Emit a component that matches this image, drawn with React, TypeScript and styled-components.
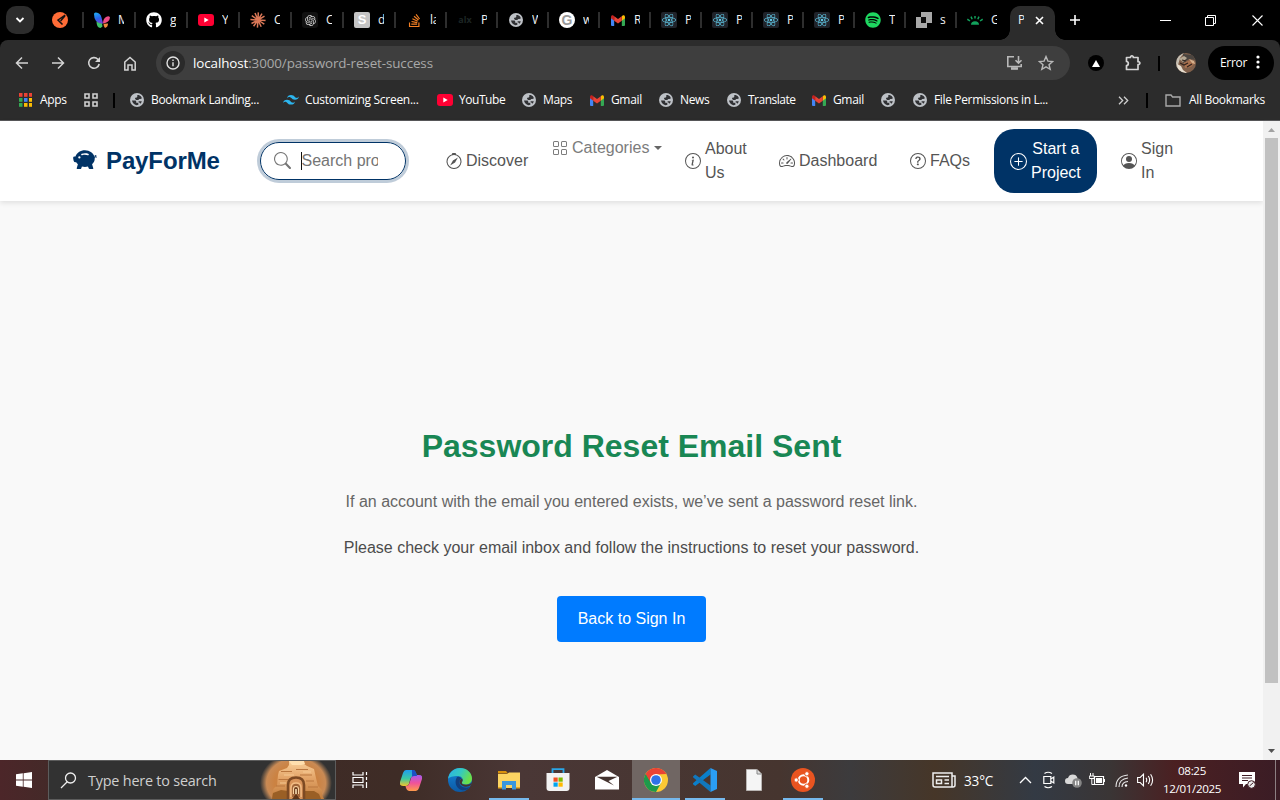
import React from "react";
import styled, { createGlobalStyle, css } from "styled-components";
import {
  BsPiggyBankFill,
  BsSearch,
  BsCompass,
  BsGrid,
  BsInfoCircle,
  BsSpeedometer2,
  BsQuestionCircle,
  BsPlusCircle,
  BsPersonCircle,
} from "react-icons/bs";
import { FaReact, FaGithub, FaSpotify, FaStackOverflow } from "react-icons/fa";
import { RiOpenaiFill } from "react-icons/ri";

const ui = `"Open Sans", "Noto Sans", sans-serif`;
const arial = `"Liberation Sans", Arial, sans-serif`;

const GlobalStyle = createGlobalStyle`
  *, *::before, *::after { box-sizing: border-box; }
  html, body { margin: 0; padding: 0; background: #000; overflow: hidden; }
  svg { display: block; flex: none; }
`;

/* ---------- window ---------- */

const Screen = styled.div`
  width: 1280px;
  height: 800px;
  display: flex;
  flex-direction: column;
  overflow: hidden;
  font-family: ${ui};
`;

const TabStrip = styled.div`
  height: 40px;
  flex: none;
  display: flex;
  align-items: center;
  background: #000;
  color: #f2f2f2;
`;

const TabSearch = styled.div`
  width: 28px;
  height: 28px;
  margin-left: 6px;
  border-radius: 10px;
  background: #2c2c2c;
  display: flex;
  align-items: center;
  justify-content: center;
`;

const PinnedTab = styled.div`
  width: 48px;
  padding-left: 18px;
`;

const Tab = styled.div<{ $w: number }>`
  width: ${(p) => p.$w}px;
  height: 16px;
  border-left: 2px solid #2e2e2e;
  padding-left: 10px;
  display: flex;
  align-items: center;
`;

const TabIcon = styled.span`
  width: 16px;
  height: 16px;
  display: flex;
  align-items: center;
  justify-content: center;
`;

const TabTitle = styled.span`
  width: 6px;
  margin-left: 8px;
  overflow: hidden;
  white-space: nowrap;
  font-size: 12px;
  line-height: 20px;
  letter-spacing: -0.3px;
`;

const ActiveTab = styled.div`
  position: relative;
  align-self: flex-end;
  width: 45px;
  height: 34px;
  margin-left: 4px;
  border-radius: 10px 10px 0 0;
  background: #2c2c2c;
  display: flex;
  align-items: center;
  padding-bottom: 6px;
  &::before,
  &::after {
    content: "";
    position: absolute;
    bottom: 0;
    width: 10px;
    height: 10px;
  }
  &::before {
    left: -10px;
    background: radial-gradient(circle at 0 0, transparent 9.5px, #2c2c2c 10px);
  }
  &::after {
    right: -10px;
    background: radial-gradient(circle at 100% 0, transparent 9.5px, #2c2c2c 10px);
  }
`;

const ActiveClose = styled.span`
  margin-left: 11px;
`;

const NewTab = styled.div`
  margin-left: 14px;
`;

const WindowControls = styled.div`
  margin-left: auto;
  width: 138px;
  display: flex;
  & > * {
    width: 46px;
    display: flex;
    justify-content: center;
  }
`;

const Toolbar = styled.div`
  height: 46px;
  flex: none;
  display: flex;
  align-items: center;
  background: linear-gradient(#2c2c2c, #2c2c2c);
  border-radius: 8px 8px 0 0;
  color: #d4d4d4;
`;

const NavButton = styled.div`
  width: 36px;
  display: flex;
  justify-content: center;
`;

const NavButtons = styled.div`
  display: flex;
  padding-left: 4px;
  width: 156px;
`;

const AddressBar = styled.div`
  width: 914px;
  height: 34px;
  border-radius: 17px;
  background: #3e3e3e;
  display: flex;
  align-items: center;
  padding: 0 16px 0 5px;
`;

const SiteInfo = styled.div`
  width: 24px;
  height: 24px;
  border-radius: 50%;
  background: #2a2a2a;
  display: flex;
  align-items: center;
  justify-content: center;
`;

const Url = styled.div`
  margin-left: 8px;
  font-size: 13.4px;
  letter-spacing: -0.1px;
  color: #a9a9a9;
  flex: 1;
  b {
    font-weight: 400;
    color: #fff;
  }
`;

const AddressActions = styled.div`
  display: flex;
  gap: 15px;
  align-items: center;
`;

const ToolbarRight = styled.div`
  flex: 1;
  display: flex;
  align-items: center;
  padding-left: 18px;
`;

const Extension = styled.div`
  width: 16px;
  height: 16px;
  border-radius: 50%;
  background: #000;
  display: flex;
  align-items: center;
  justify-content: center;
`;

const VLine = styled.span<{ $ml?: number; $mr?: number }>`
  width: 2px;
  height: 15px;
  background: #000;
  flex: none;
  margin-left: ${(p) => p.$ml ?? 0}px;
  margin-right: ${(p) => p.$mr ?? 0}px;
`;

const PuzzleSlot = styled.div`
  margin-left: 20px;
`;

const ErrorPill = styled.div`
  width: 66px;
  height: 34px;
  margin-left: 12px;
  border-radius: 17px;
  background: #000;
  color: #fff;
  display: flex;
  align-items: center;
  justify-content: space-between;
  padding: 0 14px 2px 12px;
  font-size: 12px;
  letter-spacing: -0.3px;
`;

const BookmarksBar = styled.div`
  height: 35px;
  flex: none;
  display: flex;
  align-items: center;
  background: #2c2c2c;
  border-bottom: 1px solid #58585a;
  padding: 0 0 6px 18px;
  color: #fff;
`;

const Bookmark = styled.div<{ $w?: number; $gap?: number; $ls?: number }>`
  width: ${(p) => (p.$w ? p.$w + "px" : "auto")};
  display: flex;
  align-items: center;
  gap: ${(p) => p.$gap ?? 6}px;
  font-size: 12px;
  line-height: 16px;
  letter-spacing: ${(p) => p.$ls ?? -0.35}px;
  white-space: nowrap;
`;

const BookmarksEnd = styled.div`
  margin-left: auto;
  display: flex;
  align-items: center;
  padding-right: 15px;
`;

/* ---------- page ---------- */

const Viewport = styled.div`
  flex: 1;
  display: flex;
  min-height: 0;
`;

const Page = styled.main`
  flex: 1;
  display: flex;
  flex-direction: column;
  background: #f9f9f9;
  font-family: ${arial};
  font-size: 16px;
  line-height: 24px;
`;

const Header = styled.header`
  height: 80px;
  flex: none;
  display: flex;
  align-items: center;
  background: #fff;
  box-shadow: 0 2px 5px rgba(0, 0, 0, 0.1);
  color: #555;
`;

const Brand = styled.div`
  width: 187px;
  margin-left: 73px;
  display: flex;
  align-items: center;
  gap: 9px;
  color: #036;
  font-size: 24px;
  font-weight: 700;
  line-height: 36px;
  letter-spacing: -0.12px;
  svg {
    margin-bottom: 2px;
  }
`;

const SearchField = styled.div`
  width: 146px;
  height: 38px;
  flex: none;
  border: 1px solid #036;
  border-radius: 19px;
  box-shadow: 0 0 0 3px rgba(0, 51, 102, 0.25);
  display: flex;
  align-items: center;
  padding: 0 0 1px 13px;
  color: #757575;
`;

const Placeholder = styled.span`
  margin-left: 10px;
  width: 77px;
  height: 18px;
  line-height: 18px;
  border-left: 1px solid #111;
  overflow: hidden;
  white-space: nowrap;
  text-indent: -0.5px;
`;

const MenuLink = styled.a<{ $w: number; $gap?: number; $top?: boolean }>`
  width: ${(p) => p.$w}px;
  flex: none;
  display: flex;
  align-items: center;
  gap: ${(p) => p.$gap ?? 4}px;
  ${(p) =>
    p.$top &&
    css`
      align-self: flex-start;
      margin-top: 15px;
      color: #7c7c7c;
    `}
`;

const Menu = styled.nav`
  display: flex;
  align-items: center;
  height: 80px;
  margin-left: 40px;
`;

const Caret = styled.i`
  border: 4.5px solid transparent;
  border-top-color: #666;
  border-bottom: 0;
  margin-left: 1px;
`;

const StartButton = styled.a`
  width: 103px;
  height: 64px;
  margin-right: 24px;
  border-radius: 20px;
  background: #036;
  color: #fff;
  display: flex;
  align-items: center;
  gap: 4px;
  padding-left: 16px;
  text-align: center;
`;

const Content = styled.section`
  flex: 1;
  display: flex;
  flex-direction: column;
  align-items: center;
  padding-top: 226px;
`;

const Title = styled.h1`
  margin: 0;
  font-size: 32px;
  line-height: 38px;
  font-weight: 700;
  color: #198754;
  white-space: nowrap;
`;

const Message = styled.p<{ $mt: number; $color: string }>`
  margin: ${(p) => p.$mt}px 0 0;
  color: ${(p) => p.$color};
`;

const BackButton = styled.a`
  width: 149px;
  height: 46px;
  margin-top: 36px;
  border-radius: 4px;
  background: #007bff;
  color: #fff;
  display: flex;
  align-items: center;
  justify-content: center;
`;

const ScrollBar = styled.div`
  width: 17px;
  flex: none;
  background: #f1f1f1;
  display: flex;
  flex-direction: column;
  align-items: center;
`;

const ScrollArrow = styled.div`
  height: 17px;
  display: flex;
  align-items: center;
`;

const Thumb = styled.div`
  width: 13px;
  height: 545px;
  margin-bottom: 59px;
  background: #c1c1c1;
`;

/* ---------- taskbar ---------- */

const Taskbar = styled.footer`
  height: 40px;
  flex: none;
  display: flex;
  color: #fff;
  background: linear-gradient(
    90deg,
    #4c2629 0,
    #422a28 60px,
    #3e2c26 400px,
    #4a3736 520px,
    #46352f 780px,
    #3c3b3d 850px,
    #463628 935px,
    #333a44 1035px,
    #3a3535 1110px,
    #4b2022 1175px,
    #3a1c25 1280px
  );
`;

const Start = styled.div`
  width: 48px;
  display: flex;
  align-items: center;
  justify-content: center;
`;

const TaskSearch = styled.div`
  width: 288px;
  border: 1px solid #5c5c5c;
  background: #323232;
  display: flex;
  align-items: center;
  padding: 0 3px 0 11px;
  color: #cfcfcf;
  font-size: 14.4px;
  letter-spacing: -0.2px;
  span {
    flex: 1;
    margin-left: 11px;
  }
`;

const TaskCell = styled.div<{ $w?: number; $line?: number; $active?: boolean }>`
  width: ${(p) => p.$w ?? 48}px;
  margin-right: ${(p) => (p.$w ? 3 : 1)}px;
  height: 40px;
  display: flex;
  flex-direction: column;
  align-items: center;
  background: ${(p) => (p.$active ? "#706663" : "transparent")};
  & > span {
    height: 38px;
    display: flex;
    align-items: center;
    padding-top: 2px;
  }
  &::after {
    content: "";
    width: ${(p) => p.$line ?? 0}px;
    height: 2px;
    background: #76b9ed;
  }
`;

const Tray = styled.div`
  margin-left: auto;
  display: flex;
  align-items: center;
`;

const Weather = styled.div`
  display: flex;
  align-items: center;
  gap: 8px;
  width: 81px;
  font-size: 13.6px;
  letter-spacing: -0.2px;
`;

const TrayIcon = styled.div`
  width: 24px;
  display: flex;
  justify-content: center;
`;

const Clock = styled.div`
  width: 70px;
  text-align: center;
  font-size: 11.6px;
  line-height: 18px;
  letter-spacing: -0.35px;
  white-space: nowrap;
`;

const Notice = styled.div`
  width: 48px;
  padding-right: 8px;
  display: flex;
  justify-content: center;
`;

const DesktopEdge = styled.div`
  width: 5px;
  height: 40px;
  border-left: 1px solid #8c7f82;
`;

/* ---------- icons ---------- */

const Globe = () => (
  <svg width="14" height="14" viewBox="0 0 14 14">
    <circle cx="7" cy="7" r="7" fill="#bdc1c6" />
    <path
      d="M2 7.6h3.2q1 0 1 1v1.2h1.2q1 0 1 1v.9q-1.2.6-2.6.4Q2.6 11 2 7.6zM7.3 1.9h1.5q2.5.8 3.2 3.3l-1.6.9H9.2L8.3 7H6.2L5.1 6V4.700h1.2l1-1zM8.600 8.200h3.200q-.4 1.600-1.600 2.500l-.7-1.100h-.9z"
      fill="#303134"
    />
  </svg>
);

const YouTube = () => (
  <svg width="16" height="12" viewBox="0 0 16 12">
    <rect width="16" height="12" rx="3" fill="#ff0033" />
    <path d="M6.300 3.600v4.800L10.700 6z" fill="#fff" />
  </svg>
);

const Gmail = () => (
  <svg width="14" height="11" viewBox="0 0 14 11">
    <path d="M0 2v8q0 1 1 1h2.200V4z" fill="#4285f4" />
    <path d="M14 2v8q0 1-1 1h-2.200V4z" fill="#34a853" />
    <path d="M10.800 1.200L12 .3Q14-.4 14 2v1.300l-3.200 2.400z" fill="#fbbc04" />
    <path d="M3.200 1.200L2 .3Q0-.4 0 2v1.300l3.200 2.400z" fill="#c5221f" />
    <path d="M3.200 1.200L7 4.100l3.800-2.900v4.500L7 8.600 3.200 5.700z" fill="#ea4335" />
  </svg>
);

const Postman = () => (
  <svg width="16" height="16" viewBox="0 0 16 16">
    <circle cx="8" cy="8" r="8" fill="#ff6c37" />
    <path d="M13.200 3.200L6 8l4.500 4.600M13 3.800L8.600 9" stroke="#111" strokeWidth="1.500" fill="none" />
  </svg>
);

const Butterfly = () => (
  <svg width="16" height="16" viewBox="0 0 16 16">
    <defs>
      <linearGradient id="wing" x1="0" y1="0" x2="0.300" y2="1">
        <stop offset="0" stopColor="#1fb5f5" />
        <stop offset="0.600" stopColor="#2a62e8" />
        <stop offset="1" stopColor="#6b46d8" />
      </linearGradient>
    </defs>
    <path d="M0 2Q0 .3 2 .5q4.500.5 5.500 5l1.500 6-2 .5Q0 10 0 2z" fill="url(#wing)" />
    <path d="M2.500 9.500Q5 11.500 8 11.500l.5 3-2 1.500Q2.500 15.500 2.500 9.500z" fill="#3fc06a" />
    <path d="M16 5.500q-1-2-3.500-.8Q9 6.500 9 11.500 15.500 10.500 16 5.500z" fill="#ee4b86" />
    <path d="M9.500 11.800l4.500-.3q0 3.500-3 4.500-1.500-1-1.500-4.200z" fill="#f08a3c" />
  </svg>
);

const Burst = () => (
  <svg width="16" height="16" viewBox="0 0 16 16">
    <path
      d="M8 8L8.300.4M8 8l4-6.300M8 8l6.500-3.800M8 8l7.600.6M8 8l6.300 4.200M8 8l3.200 6.800M8 8l-.6 7.600M8 8l-4.400 6.300M8 8l-6.500 3.500M8 8L.4 7.600M8 8L1.800 3.600M8 8L5 1"
      stroke="#d97757"
      strokeWidth="1.500"
    />
  </svg>
);

const OpenAi = styled.span`
  width: 16px;
  height: 16px;
  border-radius: 3px;
  background: #111;
  color: #d8d8d8;
  display: flex;
  align-items: center;
  justify-content: center;
`;

const LetterTile = styled.span<{ $round?: boolean }>`
  width: 16px;
  height: 16px;
  border-radius: ${(p) => (p.$round ? 8 : 2)}px;
  background: ${(p) => (p.$round ? "#fff" : "#c4c4c4")};
  color: ${(p) => (p.$round ? "#9a9a9a" : "#fff")};
  font: 700 ${(p) => (p.$round ? 14 : 13)}px/16px ${arial};
  text-align: center;
`;

const Alx = styled.span`
  font: 700 9px/16px ${ui};
  color: #1c2524;
`;

const ReactTile = styled.span`
  width: 16px;
  height: 16px;
  border-radius: 2px;
  background: #20232a;
  color: #61c8e6;
  display: flex;
  align-items: center;
  justify-content: center;
`;

const Squares = () => (
  <svg width="16" height="16" viewBox="0 0 16 16">
    <path d="M5 0h11v11H5z" fill="#a8a8a8" />
    <path d="M0 5h11v11H0z" fill="#a8a8a8" />
    <path d="M5 5h5v6H5z" fill="#0c0c0c" />
  </svg>
);

const Sunrise = () => (
  <svg width="16" height="9" viewBox="0 0 16 9">
    <path d="M4 8.800a4 3.600 0 0 1 8 0z" fill="#12a15c" />
    <path d="M.3 3.200l2.700 1.800M4 .6l1.200 2.600M8 0v2.500M12 .6l-1.200 2.600M15.700 3.200L13 5" stroke="#12a15c" strokeWidth="1.500" />
  </svg>
);

const Tailwind = () => (
  <svg width="16" height="10" viewBox="0 0 24 15">
    <path
      d="M12 0C8.800 0 6.800 1.600 6 4.800 7.200 3.200 8.600 2.600 10.200 3c.913.228 1.565.890 2.288 1.624C13.666 5.818 15.027 7.200 18 7.200c3.200 0 5.200-1.600 6-4.800-1.200 1.600-2.600 2.200-4.200 1.800-.913-.228-1.565-.890-2.288-1.624C16.337 1.382 14.976 0 12 0zM6 7.200c-3.200 0-5.200 1.600-6 4.800 1.200-1.600 2.600-2.200 4.200-1.800.913.228 1.565.890 2.288 1.624 1.177 1.194 2.538 2.576 5.512 2.576 3.200 0 5.200-1.600 6-4.800-1.200 1.600-2.600 2.200-4.200 1.800-.913-.228-1.565-.890-2.288-1.624C10.337 8.582 8.976 7.200 6 7.200z"
      fill="#2cb5ee"
    />
  </svg>
);

const AppsGrid = () => {
  const colors = ["#ea4335", "#ea4335", "#ea4335", "#34a853", "#4285f4", "#fbbc04", "#34a853", "#fbbc04", "#fbbc04"];
  return (
    <svg width="14" height="14" viewBox="0 0 14 14">
      {colors.map((c, i) => (
        <rect key={i} x={1 + (i % 3) * 5} y={Math.floor(i / 3) * 5} width="3.500" height="3.800" fill={c} />
      ))}
    </svg>
  );
};

type StrokeProps = { w: number; h?: number; d: string; sw?: number; color?: string };
const Stroke = ({ w, h = w, d, sw = 1.5, color = "currentColor" }: StrokeProps) => (
  <svg width={w} height={h} viewBox={`0 0 ${w} ${h}`} fill="none" stroke={color} strokeWidth={sw}>
    <path d={d} />
  </svg>
);

const Reload = () => (
  <svg width="14" height="14" viewBox="0 0 14 14">
    <path d="M12.200 8A5.300 5.300 0 1 1 10.800 3.200L12 4.400" fill="none" stroke="currentColor" strokeWidth="1.600" />
    <path d="M13 1v5H8z" fill="currentColor" />
  </svg>
);

const InfoDot = () => (
  <svg width="14" height="14" viewBox="0 0 14 14" stroke="#e0e0e0" fill="none" strokeWidth="1.400">
    <circle cx="7" cy="7" r="6" />
    <path d="M7 6.200v4M7 3.600v1.500" />
  </svg>
);

const Install = () => (
  <svg width="17" height="16" viewBox="0 0 17 16" stroke="#b9b9b9" fill="none" strokeWidth="1.600">
    <path d="M8 1.800H1.800v9.700h13.400V9M12.500 1v7M9.500 5.200l3 3 3-3" />
    <path d="M5 13.500h7" strokeWidth="2.600" />
  </svg>
);

const Star = () => (
  <svg width="16" height="16" viewBox="0 0 16 16" stroke="#b9b9b9" fill="none" strokeWidth="1.400">
    <path d="M8 1.600l1.900 4.500 4.800.4-3.700 3.200 1.200 4.700L8 11.900l-4.200 2.500L5 9.700 1.300 6.500l4.800-.4z" />
  </svg>
);

const Puzzle = () => (
  <svg width="18" height="18" viewBox="0 0 18 18">
    <path
      d="M2.500 3.500h4c-.2-2.200 3-2.200 2.800 0h4.700v4.200c2.500-.2 2.500 3 0 2.800v5H2.500v-4c2.400 0 2.400-4 0-4z"
      fill="none"
      stroke="#d4d4d4"
      strokeWidth="1.700"
      strokeLinejoin="round"
    />
  </svg>
);

const Avatar = () => (
  <svg width="20" height="20" viewBox="0 0 20 20">
    <defs>
      <clipPath id="avatarClip">
        <circle cx="10" cy="10" r="10" />
      </clipPath>
    </defs>
    <g clipPath="url(#avatarClip)">
      <path d="M0 0h20v20H0z" fill="#80604b" />
      <path d="M0 0h8L4 5 2 12v8H0z" fill="#c4beb2" />
      <path d="M7 1l9 1 4 5-7-1-6 4z" fill="#4b4540" />
      <path d="M3 6l5-3 3 2-4 4z" fill="#b5a894" />
      <path d="M8 10l6-3 5 3-4 4-6 1z" fill="#a9714f" />
      <path d="M1 11l4 2 2 4 4 3H3z" fill="#e8dfd0" />
      <path d="M13 6l5 2 1 3-3-1z" fill="#d6b08c" />
      <path d="M4 10l4 2 4-2M6 7l4 1M11 14l5-3" stroke="#33241e" fill="none" strokeWidth="1.200" />
    </g>
  </svg>
);

const Windows = () => (
  <svg width="16" height="16" viewBox="0 0 16 16" fill="#fff">
    <path d="M0 2.300L6.800 1.300v6.200H0zM7.600 1.200L16 0v7.500H7.600zM0 8.400h6.800v6.300L0 13.700zM7.600 8.400H16V16l-8.400-1.200z" />
  </svg>
);

const Canyon = () => (
  <svg width="72" height="38" viewBox="0 0 72 38">
    <defs>
      <linearGradient id="sand" x1="0" y1="0" x2="0" y2="1">
        <stop offset="0" stopColor="#f9d09a" />
        <stop offset="0.450" stopColor="#e3a468" />
        <stop offset="1" stopColor="#c17c3c" />
      </linearGradient>
      <radialGradient id="glow">
        <stop offset="0.600" stopColor="#cb8242" />
        <stop offset="0.820" stopColor="#c98a54" />
        <stop offset="1" stopColor="#b98a60" stopOpacity="0" />
      </radialGradient>
    </defs>
    <ellipse cx="36" cy="22" rx="36" ry="30" fill="url(#glow)" />
    <path d="M12 38V31l2-4 3-2 1-11 1-4 8-3 2-3V0h15v3l3 2 7 3 2 9 2 8 4 4v5l2 4z" fill="url(#sand)" />
    <path d="M29 0h15l1 3-4 1H32z" fill="#ffdfae" />
    <path d="M36 8.500h12M21 10.500h11M40 14h12M18.500 18.500h10M46 20h8M16 25h9M48 26h10" stroke="#b9763e" strokeWidth="1.200" />
    <path d="M24 14h10M43 11h8M20 22h6" stroke="#f6c993" strokeWidth="1.200" />
    <path d="M13 32l8-3 7 1v8H12zM45 30h9l5 3 2 5H44z" fill="#9a5f25" />
    <path d="M28 38V24q0-7.500 8-7.500t8 7.500v14" fill="#d8935a" stroke="#7d4a23" strokeWidth="2.600" />
    <path d="M31 36v-9q0-5 5-5t5 5v9" fill="#a2663a" stroke="#f3bd85" strokeWidth="1.500" />
    <path d="M33.500 33v-5q0-2.500 2.500-2.500t2.500 2.500v5" fill="#6d3c1c" stroke="#f9d2a0" strokeWidth="1.100" />
    <path d="M36 28v5" stroke="#ffe9c0" strokeWidth="1.500" />
    <path d="M32 38l4-5 4 5z" fill="#5f3417" />
  </svg>
);

const Copilot = () => (
  <svg width="22" height="21" viewBox="0 0 22 21">
    <defs>
      <linearGradient id="cpA" x1="0" y1="0" x2="0" y2="1">
        <stop offset="0" stopColor="#1f9cf0" />
        <stop offset="0.550" stopColor="#3dc9a0" />
        <stop offset="1" stopColor="#f4c52c" />
      </linearGradient>
      <linearGradient id="cpB" x1="0" y1="0" x2="0" y2="1">
        <stop offset="0" stopColor="#a45cf0" />
        <stop offset="0.500" stopColor="#f0529a" />
        <stop offset="1" stopColor="#ff9b4a" />
      </linearGradient>
    </defs>
    <path d="M6 0h7q2 0 3 3l1 3h-3q-3 0-4 4l-1 4q-1 2-3 2H3q-4 0-3-4L3 3q1-3 3-3z" fill="url(#cpA)" />
    <path d="M16 21H9q-2 0-3-3l-.5-2q3 .5 4.200-3.500L11 8q1-3 4-3h4q4 0 3 4l-3 9q-1 3-3 3z" fill="url(#cpB)" />
    <path d="M12 0h2q2 1 3 6h-3q-1 0-2 .8z" fill="#1d51c4" />
  </svg>
);

const Edge = () => (
  <svg width="24" height="24" viewBox="0 0 24 24">
    <defs>
      <linearGradient id="edA" x1="0" y1="0" x2="1" y2="0.400">
        <stop offset="0" stopColor="#2ab0e8" />
        <stop offset="0.550" stopColor="#35c9c0" />
        <stop offset="1" stopColor="#6be04a" />
      </linearGradient>
      <linearGradient id="edB" x1="0" y1="0" x2="0" y2="1">
        <stop offset="0" stopColor="#1685d8" />
        <stop offset="1" stopColor="#0c59a4" />
      </linearGradient>
    </defs>
    <circle cx="12" cy="12" r="12" fill="url(#edB)" />
    <path d="M0 11C1 4 6 0 12 0c7 0 12 5 12 10.500 0 4-3 6-6.500 6-3 0-4-1.200-3.500-2.200 2-3.300-.5-6.300-4-6.300C5 8 1 9 0 11z" fill="url(#edA)" />
    <path d="M9 9c-3 5-1 11 4 13 4 1 7-.5 9-3-6 2-11-1-10.500-5 0-2 1-3 2-3.500Q12 8 9 9z" fill="#123f7e" />
    <path d="M14 10.500c-3 1.500-3.200 5 0 7s6.500 1 8.700-.2L24 14.500q-2 2.500-6.500 2.200-4.500-.2-3.500-2.700 1.500-1.700 0-3.500z" fill="#44332f" />
  </svg>
);

const Explorer = () => (
  <svg width="22" height="19" viewBox="0 0 22 19">
    <path d="M0 0h8l2 2.500H0z" fill="#d9920c" />
    <path d="M0 3h9l2-1.500h11V17H0z" fill="#fcd462" />
    <path d="M4 10h14v8.500h-4V14H8v4.500H4z" fill="#3a96dd" />
    <path d="M0 16h4v1.500H0zM18 16h4v1.500h-4z" fill="#e8a823" />
  </svg>
);

const Store = () => (
  <svg width="24" height="24" viewBox="0 0 24 24">
    <path d="M6.500 6V1.200h11V6" fill="none" stroke="#2aa7e8" strokeWidth="1.800" />
    <path d="M.5 5h23v15q0 3-3 3h-17q-3 0-3-3z" fill="#f2f2f2" />
    <path d="M7.500 9.500h4.200v4.200H7.500z" fill="#f25022" />
    <path d="M12.500 9.500h4.200v4.200h-4.200z" fill="#7fba00" />
    <path d="M7.500 14.500h4.200v4.200H7.500z" fill="#00a4ef" />
    <path d="M12.500 14.500h4.200v4.200h-4.200z" fill="#ffb900" />
  </svg>
);

const Mail = () => (
  <svg width="24" height="20" viewBox="0 0 24 20">
    <path d="M0 7l12-7 12 7v12.500H0z" fill="#fff" />
    <path d="M1.500 6.700h21L13.500 11l5.500 4.500L12 12z" fill="#44332f" />
  </svg>
);

const Chrome = () => (
  <svg width="24" height="24" viewBox="0 0 24 24">
    <circle cx="12" cy="12" r="12" fill="#fcc934" />
    <path d="M12 12L1.600 6A12 12 0 0 0 12 24l5-9z" fill="#1e9a4b" />
    <path d="M1.600 6A12 12 0 0 1 22.400 6L12 6.500l-5.200 8.300z" fill="#ea4335" />
    <circle cx="12" cy="12" r="6" fill="#fff" />
    <circle cx="12" cy="12" r="4.800" fill="#2f72e8" />
  </svg>
);

const VsCode = () => (
  <svg width="24" height="24" viewBox="0 0 24 24">
    <path d="M17.500 0v6.500L2.200 18 0 16.200q-.3-.5 0-1z" fill="#0a7fcb" />
    <path d="M0 8.500L2.200 6.500 17.500 17.500V24L0 9.300q-.3-.4 0-.8z" fill="#1177bd" />
    <path d="M17.500 0L24 3v18l-6.500 3z" fill="#2a9df4" />
  </svg>
);

const Doc = () => (
  <svg width="16" height="22" viewBox="0 0 16 22">
    <path d="M.5.500H11L15.500 5v16.500H.5z" fill="#f5f5f5" stroke="#b9b5b3" />
    <path d="M11 .5V5h4.500" fill="#ddd" stroke="#888" />
  </svg>
);

const Ubuntu = () => (
  <svg width="24" height="24" viewBox="0 0 24 24">
    <circle cx="12" cy="12" r="12" fill="#e95420" />
    <circle cx="12.500" cy="12" r="4.800" fill="none" stroke="#fff" strokeWidth="2" />
    <g fill="#fff" stroke="#e95420" strokeWidth="1">
      <circle cx="5.200" cy="12" r="2.200" />
      <circle cx="15.900" cy="5.800" r="2.200" />
      <circle cx="15.900" cy="18.200" r="2.200" />
    </g>
  </svg>
);

const News = () => (
  <svg width="24" height="16" viewBox="0 0 24 16" fill="none" stroke="#eee" strokeWidth="1.500">
    <path d="M1 1h19v14H3q-2 0-2-2zM20 4h3v9q0 2-2 2h-2M4 4.500h13M12.500 8H17M12.500 11.500H17M4.500 8h5v3.500h-5z" />
  </svg>
);

const Meet = () => (
  <svg width="12" height="18" viewBox="0 0 12 18" fill="none" stroke="#fff" strokeWidth="1.200">
    <path d="M.8 5.500h7v7h-7zM7.800 8l3-2v6l-3-2M1.500 2.500Q5 0 9 2.500M1.500 15.500Q5 18 9 15.500" />
  </svg>
);

const Cloud = () => (
  <svg width="17" height="15" viewBox="0 0 17 15">
    <path d="M3 11a3 3 0 0 1 0-6 5 5 0 0 1 9.500 0v6z" fill="#d9d9d9" />
    <circle cx="12" cy="10" r="4.800" fill="#858585" />
    <path d="M10.700 7.800v4.400M13.300 7.800v4.400" stroke="#fff" strokeWidth="1.200" />
  </svg>
);

const Battery = () => (
  <svg width="16" height="14" viewBox="0 0 16 14">
    <path d="M5.500 3.500h9v8h-9z" fill="none" stroke="#fff" strokeWidth="1.200" />
    <path d="M7 5h6v5H7zM15 6h1v3h-1z" fill="#fff" />
    <path d="M1.500 0v3M4 0v3M.3 3h5v2.500H.3zM2.800 5v6.500H5" stroke="#fff" fill="none" />
  </svg>
);

const Wifi = () => (
  <svg width="13" height="13" viewBox="0 0 13 13" fill="none" stroke="#e6e6e6" strokeWidth="1.100">
    <path d="M1 13Q1 2 13 1M4 13q0-8 9-9M7 13q0-5 6-5.500" />
    <circle cx="11" cy="11.500" r="1.200" fill="#fff" stroke="none" />
  </svg>
);

const Sound = () => (
  <svg width="17" height="14" viewBox="0 0 17 14" fill="none" stroke="#fff" strokeWidth="1.100">
    <path d="M.6 4.500h2.600L6.500 1.200v11.600L3.200 9.500H.6zM9 4.700q1.500 2.300 0 4.600M11.300 3q2.700 4 0 8M13.600 1.200q4 5.800 0 11.600" />
  </svg>
);

const NoticeIcon = () => (
  <svg width="17" height="17" viewBox="0 0 17 17">
    <path d="M0 0h16v12H7l-3 3.500V12H0z" fill="#fff" />
    <path d="M3 3.500h10M3 6h10M3 8.500h6" stroke="#3f1c24" strokeWidth="1.100" />
    <circle cx="12.500" cy="12.500" r="3.800" fill="#eee" stroke="#3f1c24" />
    <path d="M10.500 14l4-3.500" stroke="#3f1c24" />
  </svg>
);

/* ---------- data ---------- */

const reactTab = (
  <ReactTile>
    <FaReact size={14} />
  </ReactTile>
);

const tabs: { icon: React.ReactNode; title: string }[] = [
  { icon: <Butterfly />, title: "M" },
  { icon: <FaGithub size={16} color="#fff" />, title: "g" },
  { icon: <YouTube />, title: "Y" },
  { icon: <Burst />, title: "C" },
  { icon: <OpenAi><RiOpenaiFill size={13} /></OpenAi>, title: "C" },
  { icon: <LetterTile>S</LetterTile>, title: "d" },
  { icon: <FaStackOverflow size={15} color="#f48024" />, title: "la" },
  { icon: <Alx>alx</Alx>, title: "P" },
  { icon: <Globe />, title: "W" },
  { icon: <LetterTile $round>G</LetterTile>, title: "w" },
  { icon: <Gmail />, title: "R" },
  { icon: reactTab, title: "P" },
  { icon: reactTab, title: "P" },
  { icon: reactTab, title: "P" },
  { icon: reactTab, title: "P" },
  { icon: <FaSpotify size={16} color="#1ed760" />, title: "T" },
  { icon: <Squares />, title: "s" },
  { icon: <Sunrise />, title: "G" },
];

const bookmarks: { icon: React.ReactNode; label?: string; w: number; gap?: number; ls?: number }[] = [
  { icon: <Globe />, label: "Bookmark Landing...", w: 153, gap: 7 },
  { icon: <Tailwind />, label: "Customizing Screen...", w: 154, ls: -0.28 },
  { icon: <YouTube />, label: "YouTube", w: 85, ls: -0.45 },
  { icon: <Globe />, label: "Maps", w: 68, gap: 7 },
  { icon: <Gmail />, label: "Gmail", w: 69, gap: 7 },
  { icon: <Globe />, label: "News", w: 68, gap: 7 },
  { icon: <Globe />, label: "Translate", w: 85, gap: 7, ls: -0.5 },
  { icon: <Gmail />, label: "Gmail", w: 69, gap: 7 },
  { icon: <Globe />, w: 32 },
  { icon: <Globe />, label: "File Permissions in L...", w: 150, gap: 7 },
];

export default function App() {
  return (
    <Screen>
      <GlobalStyle />
      <TabStrip>
        <TabSearch>
          <Stroke w={10} h={8} d="M1.500 2l3.500 3.500L8.500 2" sw={1.8} color="#fff" />
        </TabSearch>
        <PinnedTab>
          <Postman />
        </PinnedTab>
        {tabs.map((t, i) => (
          <Tab key={i} $w={i < 6 ? 52 : 51}>
            <TabIcon>{t.icon}</TabIcon>
            <TabTitle>{t.title}</TabTitle>
          </Tab>
        ))}
        <ActiveTab>
          <TabTitle>P</TabTitle>
          <ActiveClose>
            <Stroke w={9} d="M1 1l7 7M8 1L1 8" sw={1.6} color="#fff" />
          </ActiveClose>
        </ActiveTab>
        <NewTab>
          <Stroke w={12} d="M6 1v10M1 6h10" sw={1.6} color="#fff" />
        </NewTab>
        <WindowControls>
          <span><Stroke w={11} d="M0 5.500h11" sw={1} color="#fff" /></span>
          <span><Stroke w={12} h={11} d="M.5 2.500h8v8h-8zM2.500 2.500v-2h8v8h-2" sw={1} color="#fff" /></span>
          <span><Stroke w={11} d="M.5.500l10 10M10.500.500l-10 10" sw={1.1} color="#fff" /></span>
        </WindowControls>
      </TabStrip>

      <Toolbar>
        <NavButtons>
          <NavButton><Stroke w={14} d="M13 7H2M7 1.500L1.500 7 7 12.500" /></NavButton>
          <NavButton><Stroke w={14} d="M1 7h11M7 1.500L12.500 7 7 12.500" /></NavButton>
          <NavButton><Reload /></NavButton>
          <NavButton><Stroke w={14} h={15} d="M1.800 6L7 1.500 12.200 6v8H9V9H5v5H1.800z" /></NavButton>
        </NavButtons>
        <AddressBar>
          <SiteInfo><InfoDot /></SiteInfo>
          <Url><b>localhost</b>:3000/password-reset-success</Url>
          <AddressActions>
            <Install />
            <Star />
          </AddressActions>
        </AddressBar>
        <ToolbarRight>
          <Extension>
            <svg width="8" height="7" viewBox="0 0 8 7"><path d="M4 0l4 7H0z" fill="#fff" /></svg>
          </Extension>
          <PuzzleSlot><Puzzle /></PuzzleSlot>
          <VLine $ml={16} $mr={16} />
          <Avatar />
          <ErrorPill>
            Error
            <svg width="4" height="14" viewBox="0 0 4 14" fill="#fff">
              <circle cx="2" cy="2" r="1.600" />
              <circle cx="2" cy="7" r="1.600" />
              <circle cx="2" cy="12" r="1.600" />
            </svg>
          </ErrorPill>
        </ToolbarRight>
      </Toolbar>

      <BookmarksBar>
        <Bookmark $w={66} $gap={8}>
          <AppsGrid />
          Apps
        </Bookmark>
        <Stroke w={14} d="M1 1h4v4H1zM9 1h4v4H9zM1 9h4v4H1zM9 9h4v4H9z" sw={1.6} color="#d0d0d0" />
        <VLine $ml={15} $mr={15} />
        {bookmarks.map((b, i) => (
          <Bookmark key={i} $w={b.w} $gap={b.gap} $ls={b.ls}>
            {b.icon}
            {b.label}
          </Bookmark>
        ))}
        <BookmarksEnd>
          <Stroke w={11} h={9} d="M1 .8l3.700 3.700L1 8.200M6 .8l3.700 3.700L6 8.200" sw={1.3} color="#d0d0d0" />
          <VLine $ml={17} $mr={17} />
          <Bookmark $gap={8} $ls={-0.3}>
            <Stroke w={16} h={13} d="M1 1h5l1.600 2H15v9H1z" sw={1.4} color="#a9a9a9" />
            All Bookmarks
          </Bookmark>
        </BookmarksEnd>
      </BookmarksBar>

      <Viewport>
        <Page>
          <Header>
            <Brand>
              <BsPiggyBankFill size={24} />
              PayForMe
            </Brand>
            <SearchField>
              <BsSearch size={17} />
              <Placeholder>Search projects</Placeholder>
            </SearchField>
            <Menu>
              <MenuLink $w={106}><BsCompass size={16} />Discover</MenuLink>
              <MenuLink $w={133} $top>
                <BsGrid size={16} />
                Categories
                <Caret />
              </MenuLink>
              <MenuLink $w={94}><BsInfoCircle size={16} /><span>About<br />Us</span></MenuLink>
              <MenuLink $w={131}><BsSpeedometer2 size={16} />Dashboard</MenuLink>
              <MenuLink $w={84}><BsQuestionCircle size={16} />FAQs</MenuLink>
              <StartButton><BsPlusCircle size={17} /><span>Start a<br />Project</span></StartButton>
              <MenuLink $w={60}><BsPersonCircle size={16} /><span>Sign<br />In</span></MenuLink>
            </Menu>
          </Header>
          <Content>
            <Title>Password Reset Email Sent</Title>
            <Message $mt={25} $color="#666">
              If an account with the email you entered exists, we’ve sent a password reset link.
            </Message>
            <Message $mt={22} $color="#4c4c4c">
              Please check your email inbox and follow the instructions to reset your password.
            </Message>
            <BackButton>Back to Sign In</BackButton>
          </Content>
        </Page>
        <ScrollBar>
          <ScrollArrow>
            <svg width="7" height="4" viewBox="0 0 7 4"><path d="M3.500 0L7 4H0z" fill="#a3a3a3" /></svg>
          </ScrollArrow>
          <Thumb />
          <ScrollArrow>
            <svg width="7" height="4" viewBox="0 0 7 4"><path d="M3.500 4L7 0H0z" fill="#505050" /></svg>
          </ScrollArrow>
        </ScrollBar>
      </Viewport>

      <Taskbar>
        <Start><Windows /></Start>
        <TaskSearch>
          <Stroke w={17} d="M1 16l6-6M15.500 6a5 5 0 1 1-10 0 5 5 0 0 1 10 0z" sw={1.3} color="#eee" />
          <span>Type here to search</span>
          <Canyon />
        </TaskSearch>
        <TaskCell $w={48}>
          <span>
            <Stroke w={17} h={16} d="M1 0v3h10V0M1 5.500h10v5H1zM1 16v-3h10v3M14.500 0v3M14.500 5v3M14.500 10v6" sw={1.2} color="#fff" />
          </span>
        </TaskCell>
        <TaskCell><span><Copilot /></span></TaskCell>
        <TaskCell><span><Edge /></span></TaskCell>
        <TaskCell $line={40}><span><Explorer /></span></TaskCell>
        <TaskCell><span><Store /></span></TaskCell>
        <TaskCell><span><Mail /></span></TaskCell>
        <TaskCell $line={48} $active><span><Chrome /></span></TaskCell>
        <TaskCell $line={40}><span><VsCode /></span></TaskCell>
        <TaskCell><span><Doc /></span></TaskCell>
        <TaskCell $line={40}><span><Ubuntu /></span></TaskCell>
        <Tray>
          <Weather><News />33°C</Weather>
          <TrayIcon><Stroke w={13} h={8} d="M1 7l5.500-5.500L12 7" sw={1.3} color="#fff" /></TrayIcon>
          <TrayIcon><Meet /></TrayIcon>
          <TrayIcon><Cloud /></TrayIcon>
          <TrayIcon><Battery /></TrayIcon>
          <TrayIcon><Wifi /></TrayIcon>
          <TrayIcon><Sound /></TrayIcon>
          <Clock>08:25<br />12/01/2025</Clock>
          <Notice><NoticeIcon /></Notice>
          <DesktopEdge />
        </Tray>
      </Taskbar>
    </Screen>
  );
}
